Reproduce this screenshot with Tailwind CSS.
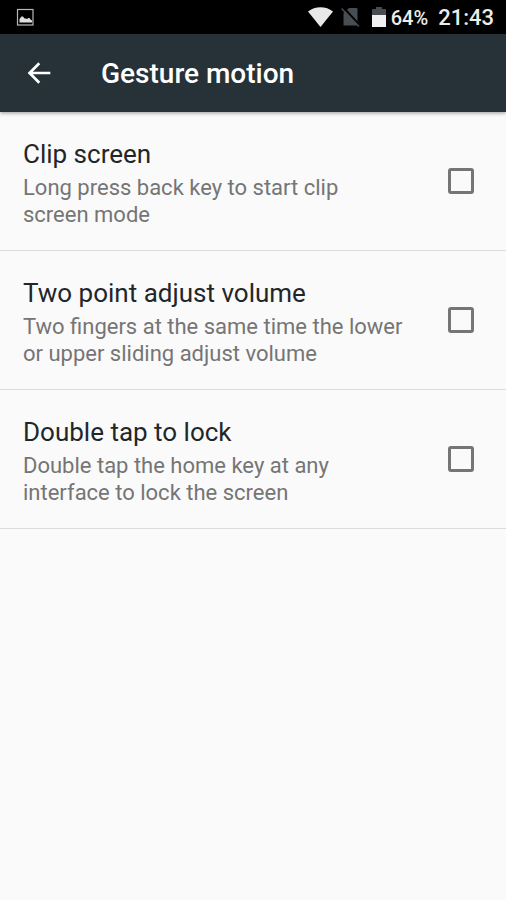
<!DOCTYPE html>
<html lang="en">
  <head>
    <meta charset="UTF-8" />
    <meta name="viewport" content="width=device-width, initial-scale=1.0" />
    <title>Gesture motion</title>
    <script src="https://cdn.jsdelivr.net/npm/@tailwindcss/browser@4"></script>
  </head>
  <body class="min-h-screen bg-[#fafafa] font-[Roboto,sans-serif] text-[#1f272b]">
    <!-- Status bar -->
    <div class="flex h-[34px] items-center justify-between bg-black pl-4 pr-3 text-[#ececec]">
      <svg class="size-[18px]" viewBox="0 0 18 18" fill="none">
        <rect x="1.5" y="1.5" width="15.5" height="15.5" stroke="#b5b8ba" stroke-width="1.2" />
        <path d="M3.5 14.5V11l2-2.500h1.500l1.500 2h1.500l1 .5 1.500-1h1l1 1.500 1.500 1v2z" fill="#e0e0e0" />
      </svg>
      <div class="flex items-center">
        <svg class="h-5 w-[25px]" viewBox="0 0 25 20">
          <path d="M0 4.5C7 -1.300 18 -1.300 25 4.5L12.5 20z" fill="#e8e8e8" />
        </svg>
        <svg class="ml-2 h-5 w-[19px]" viewBox="0 0 19 20">
          <path d="M8 1h7.500q1 0 1 1v16.500H2.500V6z" fill="#474d51" />
          <path d="M2 0l17 18.500" stroke="#000" stroke-width="2" />
          <path d="M0.5 1.5l17.500 18" stroke="#474d51" stroke-width="1.5" />
        </svg>
        <svg class="ml-3 h-5 w-[14px]" viewBox="0 0 14 20">
          <path d="M4 0h6v2h3q1 0 1 1v6H0V3q0-1 1-1h3z" fill="#474d51" />
          <path d="M0 8h14v12H0z" fill="#f0f0f0" />
        </svg>
        <span class="ml-[5px] pt-px text-[20px] font-medium">64%</span>
        <span class="ml-[10px] pt-px text-[22px] font-medium">21:43</span>
      </div>
    </div>

    <!-- App bar -->
    <header class="flex h-[78px] items-center bg-[#263238] pl-[23px] pr-6 text-white shadow-[0_1px_4px_rgba(0,0,0,0.4)]">
      <button type="button" aria-label="Back" class="mr-[46px]">
        <svg class="size-8" viewBox="0 0 24 24" fill="#fff">
          <path d="M20.5 11H7.33l5.59-5.59L11.5 4l-8 8 8 8 1.41-1.41L7.33 13H20.5z" />
        </svg>
      </button>
      <h1 class="pt-0.5 text-[28px] font-medium">Gesture motion</h1>
    </header>

    <main>
      <label class="flex h-[139px] items-center border-b border-[#dcdcdc] pl-[23px] pr-8">
        <span class="flex-1 pt-1">
          <span class="block text-[26px] leading-8">Clip screen</span>
          <span class="mt-1 block text-[22px] leading-[27px] text-[#757575]">Long press back key to start clip<br />screen mode</span>
        </span>
        <input type="checkbox" class="size-[26px] appearance-none rounded-[3px] border-3 border-[#757575]" />
      </label>
      <label class="flex h-[139px] items-center border-b border-[#dcdcdc] pl-[23px] pr-8">
        <span class="flex-1 pt-1">
          <span class="block text-[26px] leading-8">Two point adjust volume</span>
          <span class="mt-1 block text-[22px] leading-[27px] text-[#757575]">Two fingers at the same time the lower<br />or upper sliding adjust volume</span>
        </span>
        <input type="checkbox" class="size-[26px] appearance-none rounded-[3px] border-3 border-[#757575]" />
      </label>
      <label class="flex h-[139px] items-center border-b border-[#dcdcdc] pl-[23px] pr-8">
        <span class="flex-1 pt-1">
          <span class="block text-[26px] leading-8">Double tap to lock</span>
          <span class="mt-1 block text-[22px] leading-[27px] text-[#757575]">Double tap the home key at any<br />interface to lock the screen</span>
        </span>
        <input type="checkbox" class="size-[26px] appearance-none rounded-[3px] border-3 border-[#757575]" />
      </label>
    </main>
  </body>
</html>
